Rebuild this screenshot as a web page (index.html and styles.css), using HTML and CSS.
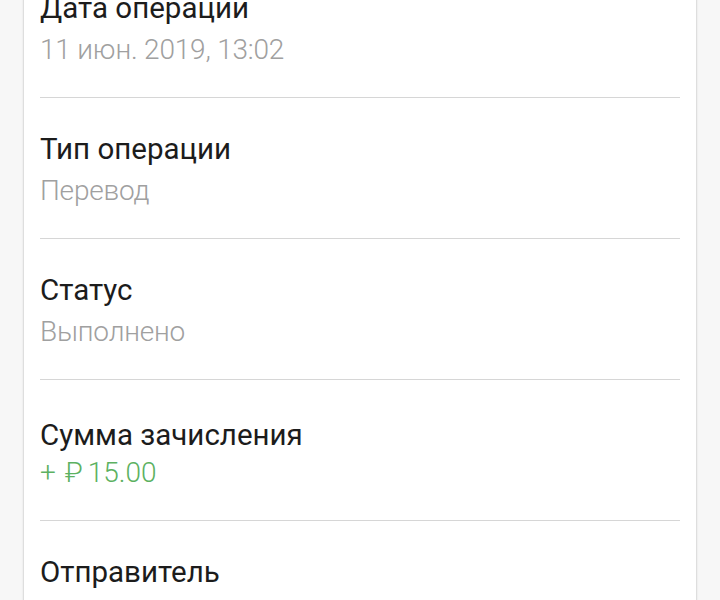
FILE: index.html
```html
<!DOCTYPE html>
<html lang="ru">
<head>
  <meta charset="UTF-8">
  <meta name="viewport" content="width=device-width, initial-scale=1.0">
  <title>Детали операции</title>
  <link rel="stylesheet" href="styles.css">
</head>
<body>
  <!-- Operation details card -->
  <div class="card">
    <div class="row">
      <div class="label">Дата операции</div>
      <div class="value">11 июн. 2019, 13:02</div>
    </div>
    <div class="row">
      <div class="label">Тип операции</div>
      <div class="value">Перевод</div>
    </div>
    <div class="row">
      <div class="label">Статус</div>
      <div class="value">Выполнено</div>
    </div>
    <div class="row row-amount">
      <div class="label">Сумма зачисления</div>
      <div class="value income">+ <span class="currency">₽</span>15.00</div>
    </div>
    <div class="row">
      <div class="label">Отправитель</div>
      <div class="value">Иван Петрович С.</div>
    </div>
  </div>
</body>
</html>
```

FILE: styles.css
```css
/* Styles */
body {
  margin: 0;
  background: #f7f7f7;
  font-family: Roboto, "Noto Sans", sans-serif;
  overflow: hidden;
  height: 600px;
}

.card {
  margin: -43px 24px 0;
  padding: 0 16px;
  background: #ffffff;
  box-shadow: 0 0 2px rgba(0, 0, 0, 0.25), 0 0 4px rgba(0, 0, 0, 0.06);
}

.row {
  box-sizing: border-box;
  height: 141px;
  padding-top: 33px;
  border-bottom: 1px solid #d6d6d6;
}

.label,
.value {
  line-height: 36px;
  white-space: nowrap;
}

.label {
  font-size: 29.5px;
  color: #1c1c1c;
}

.value {
  margin-top: 6px;
  font-size: 28px;
  font-weight: 300;
  letter-spacing: -0.2px;
  color: #a0a0a0;
}

.value.income {
  color: #5cb161;
  letter-spacing: 0;
  word-spacing: 2px;
}

.currency {
  letter-spacing: 5px;
}

/* amount row sits a little lower */
.row-amount .label {
  margin-top: 4px;
}

.row-amount .value {
  margin-top: 2px;
}
```
